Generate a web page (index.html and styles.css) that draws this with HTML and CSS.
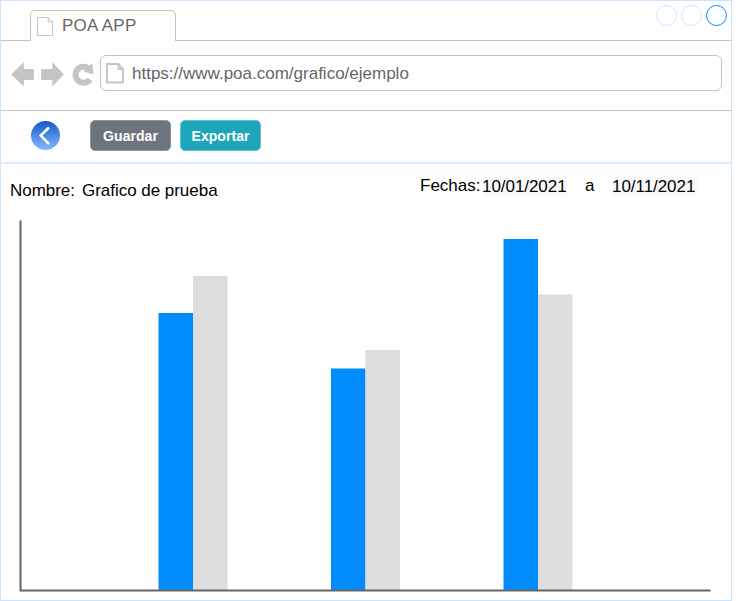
FILE: index.html
```html
<!DOCTYPE html>
<html lang="es">
<head>
<meta charset="utf-8">
<title>POA APP</title>
<link rel="stylesheet" href="styles.css">
</head>
<body>
<div class="window">
  <header class="titlebar">
    <div class="tab">
      <svg class="tab-icon" width="16" height="19" viewBox="0 0 16 19"><path d="M.5.5h10.700l4.300 4.500v13.500H.5zM11.200.5v4.500h4.300"/></svg>
      <span>POA APP</span>
    </div>
    <div class="controls"><i class="dot"></i><i class="dot"></i><i class="dot active"></i></div>
  </header>
  <div class="navbar">
    <svg class="nav-icons" width="84" height="26" viewBox="0 0 84 26">
      <path d="M.3 13.500 12.800 1v7H22.800v11H12.800v6.500zM52.800 13.500 41.300 1v7H30.200v11h11.100v6.500z"/>
      <path fill="none" stroke="#c4c4c4" stroke-width="6" d="M79 18.500A8 8 0 1 1 77.500 7.500"/>
      <path d="M72.500 10.500 81.200 2 82.500 13.200z"/>
    </svg>
    <div class="address">
      <svg class="page-icon" width="18" height="21" viewBox="0 0 18 21"><path d="M1 1h11.500L17 6v13.500H1zM12.500 1v5H17"/></svg>
      <span>https://www.poa.com/grafico/ejemplo</span>
    </div>
  </div>
  <div class="toolbar">
    <svg class="back" width="30" height="30" viewBox="0 0 30 30">
      <defs><linearGradient id="blue" x1="0" y1="0" x2="0" y2="1"><stop offset="0" stop-color="#1459c7"/><stop offset="1" stop-color="#86b9ff"/></linearGradient></defs>
      <circle cx="14.500" cy="14.500" r="14.500" fill="url(#blue)"/>
      <path d="M18 6.500 9.700 14.600 18 23" fill="none" stroke="#fff" stroke-width="2.500"/>
    </svg>
    <button class="btn save">Guardar</button>
    <button class="btn export">Exportar</button>
  </div>
  <div class="filters">
    <div class="name"><span>Nombre:</span><span>Grafico de prueba</span></div>
    <div class="dates"><span class="label">Fechas:</span><span class="date">10/01/2021</span><span class="to">a</span><span class="date">10/11/2021</span></div>
  </div>
  <svg class="chart" width="694" height="374" viewBox="18 218 694 374">
    <g fill="#008cff">
      <rect x="158.500" y="313" width="34.500" height="277.500"/>
      <rect x="331" y="368.500" width="34.500" height="222"/>
      <rect x="503.500" y="239" width="34.500" height="351.500"/>
    </g>
    <g fill="#ddd">
      <rect x="193" y="276" width="34.500" height="314.500"/>
      <rect x="365.500" y="350" width="34.500" height="240.500"/>
      <rect x="538" y="294.500" width="34.500" height="296"/>
    </g>
    <path d="M20.500 220.500v370h690" fill="none" stroke="#666" stroke-width="2"/>
  </svg>
</div>
</body>
</html>
```

FILE: styles.css
```css
* { box-sizing: border-box; }
body { margin: 0; background: #fff; font-family: "Liberation Sans", Arial, sans-serif; }
svg { display: block; }
.window { width: 732px; height: 601px; border: 1px solid #cce5ff; color: #000; }
.titlebar { height: 40px; border-bottom: 1px solid #c4c4c4; display: flex; justify-content: space-between; align-items: flex-start; }
.tab { width: 146px; height: 31px; margin: 9px 0 0 29px; padding-left: 6px; background: #fff; border: 1px solid #c4c4c4; border-bottom: 0; border-radius: 5px 5px 0 0; display: flex; align-items: flex-start; font-size: 17px; line-height: 20px; letter-spacing: .25px; color: #666; }
.tab span { margin: 5px 0 0 9px; }
.tab-icon { margin-top: 6px; fill: none; stroke: #c4c4c4; }
.controls { display: flex; gap: 4px; margin: 4px 4px 0 0; }
.dot { width: 21px; height: 21px; border: 1px solid #cce5ff; border-radius: 50%; }
.dot.active { border-color: #008cff; }
.navbar { height: 70px; border-bottom: 1px solid #c4c4c4; display: flex; align-items: flex-start; padding: 14px 9px 0 10px; }
.nav-icons { margin: 6px 5px 0 0; fill: #c4c4c4; }
.address { flex: 1; height: 36px; border: 1px solid #c4c4c4; border-radius: 6px; display: flex; align-items: flex-start; padding-left: 5px; font-size: 17px; line-height: 20px; color: #666; }
.address span { margin: 8px 0 0 8px; }
.page-icon { margin-top: 7px; fill: none; stroke: #c4c4c4; stroke-width: 1.8; }
.toolbar { height: 53px; width: 733px; margin-left: -1px; border-bottom: 2px solid #dfeeff; display: flex; align-items: flex-start; padding: 9px 0 0 31px; }
.back { margin: 1px 29px 0 0; }
.btn { width: 81px; height: 31px; margin-right: 9px; padding: 1px 0 0; border: 1px solid; border-radius: 5px; font: bold 14px/28px "Liberation Sans", Arial, sans-serif; letter-spacing: .05px; color: #fff; }
.save { background: #6c757d; border-color: #8f969c; }
.export { background: #1da5b9; border-color: #5fc0ce; }
.filters { height: 54px; display: flex; align-items: flex-start; font-size: 17px; line-height: 19px; }
.name { width: 419px; display: flex; gap: 7px; padding: 17px 0 0 9px; letter-spacing: -.03px; }
.dates { display: flex; padding-top: 13px; }
.label { width: 62px; margin-top: -1px; }
.date { width: 85px; background: #f8f9fa; letter-spacing: -.05px; }
.to { width: 45px; padding-left: 18px; margin-top: -1px; }
.chart { margin-left: 17px; }
```
